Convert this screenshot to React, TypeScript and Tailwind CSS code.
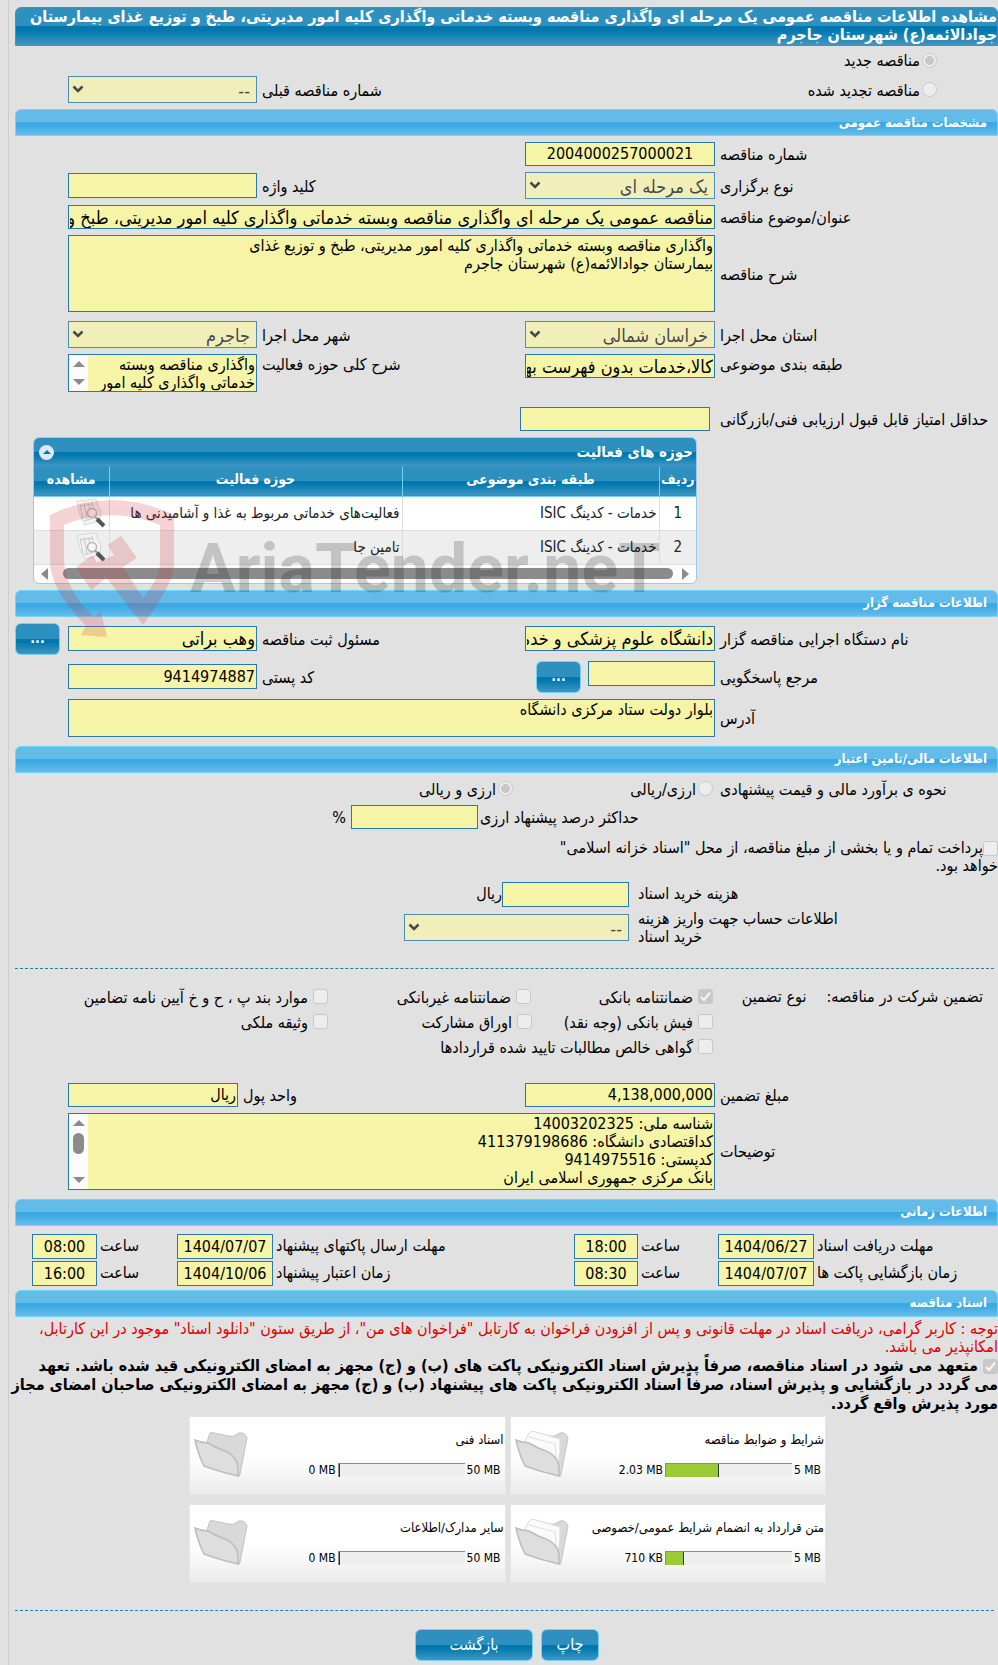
import React from "react";

const GRID = "grid grid-cols-[minmax(0,283fr)_minmax(0,190fr)_minmax(0,268fr)_minmax(0,189fr)_minmax(0,59fr)]";
const FIELD = "block w-full border border-[#2779aa] bg-[#f6f4a6] px-[1px] text-black outline-none";
const AREA = "block w-full resize-none overflow-hidden bg-[#f6f4a6] px-[1px] pt-[1px] text-[16px] leading-[18px] text-black outline-none";
const BLUE = "bg-[linear-gradient(#2e90be_0%,#2e90be_50%,#0078ae_50%,#0078ae_60%,#3f97c2_100%)]";

function Field({
  id,
  value = "",
  size = "text-[18px]",
  className = "h-6",
}: {
  id: string;
  value?: string;
  size?: string;
  className?: string;
}) {
  return <input id={id} type="text" readOnly defaultValue={value} className={`${FIELD} ${size} ${className}`} />;
}

function Label({ id, children, className = "self-center" }: { id: string; children: React.ReactNode; className?: string }) {
  return (
    <label htmlFor={id} className={`pt-[2px] pl-[5px] text-left text-[16px] leading-[18px] whitespace-nowrap ${className}`}>
      {children}
    </label>
  );
}

function Choice({ id, value }: { id: string; value: string }) {
  return (
    <div className="relative opacity-80">
      <select
        id={id}
        disabled
        className="block h-[27px] w-full appearance-none border border-[#2779aa] bg-[#f4f2b0] pr-[6px] pl-7 text-[18px] text-[#222] opacity-100"
      >
        <option>{value}</option>
      </select>
      <svg viewBox="0 0 12 8" className="pointer-events-none absolute top-[9px] left-[4px] h-2 w-3">
        <path d="M1.5 1.5 6 6l4.500-4.500" fill="none" stroke="#222" strokeWidth="2.500" />
      </svg>
    </div>
  );
}

function Section({ title }: { title: string }) {
  return (
    <h2 className="ml-[6px] flex h-[27px] items-center rounded-t-[6px] border border-[#74d1fb] bg-[linear-gradient(#63bbea_0%,#63bbea_48%,#3baae3_50%,#3baae3_60%,#65bdeb_100%)] pr-[10px] text-[13px] font-bold text-white">
      {title}
    </h2>
  );
}

function Radio({ id, name, label, checked = false }: { id: string; name: string; label: string; checked?: boolean }) {
  return (
    <span className="flex items-center gap-[2px]">
      <input
        id={id}
        name={name}
        type="radio"
        disabled
        defaultChecked={checked}
        className="size-[15px] shrink-0 appearance-none rounded-full border border-[#c8c8c8] bg-[#ededed] checked:bg-[radial-gradient(circle,#c8c8c8_0_4px,#ededed_5px)]"
      />
      <label htmlFor={id} className="pt-[2px] text-[16px] leading-[18px] whitespace-nowrap">
        {label}
      </label>
    </span>
  );
}

function Box({ id, checked = false }: { id: string; checked?: boolean }) {
  return (
    <span className="relative inline-block size-[15px] shrink-0">
      <input
        id={id}
        type="checkbox"
        disabled
        defaultChecked={checked}
        className="block size-[15px] appearance-none rounded-[3px] border border-[#c8c8c8] bg-[#ededed] checked:bg-[#c8c8c8]"
      />
      {checked && (
        <svg viewBox="0 0 15 15" className="pointer-events-none absolute inset-0 size-[15px]">
          <path d="M3 8l3 3 6-7.500" fill="none" stroke="#f4f4f4" strokeWidth="2.200" />
        </svg>
      )}
    </span>
  );
}

function Check({ id, label, checked = false }: { id: string; label: string; checked?: boolean }) {
  return (
    <span className="flex items-center gap-[5px]">
      <Box id={id} checked={checked} />
      <label htmlFor={id} className="pt-[3px] text-[16px] leading-[18px] whitespace-nowrap">
        {label}
      </label>
    </span>
  );
}

function Dots({ label }: { label: string }) {
  return (
    <button
      type="button"
      aria-label={label}
      className={`h-8 w-[45px] shrink-0 rounded-[6px] border border-[#74d1fb] text-[14px] font-bold text-white ${BLUE}`}
    >
      ...
    </button>
  );
}

function DocIcon() {
  return (
    <svg viewBox="0 0 32 30" className="h-[30px] w-8">
      <path d="M2 3 21 1q1 7 5 12l-1 10-15 4Q4 18 2 3z" fill="#f3f3f3" stroke="#d8d8d8" />
      <path d="M5 6l3 15M9 5l3 17M13 5l2 6M17 4l1 5M5 8l13-2M9 23l10-3" stroke="#c8c8c8" fill="none" />
      <circle cx="17" cy="15" r="4.500" fill="#f7f7f7" stroke="#b5b5b5" strokeWidth="1.500" />
      <path d="M20 19l3 2" stroke="#999" strokeWidth="2" />
      <path d="M22 21l7 7" stroke="#555" strokeWidth="4" />
    </svg>
  );
}

function FolderIcon({ full }: { full: boolean }) {
  return (
    <svg viewBox="0 0 54 48" className="h-12 w-[54px] shrink-0">
      <path d="M13 11 16 2q1-1 4 0l14 3q5 1 8-1l3-2q6-1 8 5L46 43q0 3-3 2z" fill="#d9d9d9" stroke="#c2c2c2" />
      {full && <path d="M10 10q3-8 7-10l15 4 13 4q1 14-2 27L16 25z" fill="#fbfbfb" stroke="#d8d8d8" />}
      {full && <path d="M14 6l26 7q2 10 0 22" fill="none" stroke="#e0e0e0" />}
      <path d="M1 9q7 3 13 3 8 5 17 8 12 5 13 16v9Q26 41 10 35 4 23 1 9z" fill="#dedede" stroke="#bdbdbd" strokeWidth="1.500" />
    </svg>
  );
}

function ScrollStrip({ thumb }: { thumb: boolean }) {
  return (
    <div className="flex w-[19px] shrink-0 flex-col items-center justify-between bg-[#fcfcfc] py-[6px]">
      <svg viewBox="0 0 12 6" className="h-[6px] w-3">
        <path d="M0 6 6 0l6 6z" fill="#8b8b8b" />
      </svg>
      {thumb && <span className="mb-4 h-[21px] w-[11px] rounded-full bg-[#8b8b8b]" />}
      <svg viewBox="0 0 12 6" className="h-[6px] w-3">
        <path d="M0 0 6 6l6-6z" fill="#8b8b8b" />
      </svg>
    </div>
  );
}

function Watermark() {
  return (
    <div aria-hidden="true" dir="ltr" className="pointer-events-none absolute top-[60px] left-[50px] flex items-start">
      <svg viewBox="50 497 126 142" className="h-[142px] w-[126px]">
        <g fill="#cf2b33" opacity=".2">
          <path d="M50 515Q112 485 174 515V566Q172 586 143 625L95 563 115 555 143 598Q160 578 160 562V525Q112 505 64 525V560Q65 590 94 617L101 612 107 637 81 635 86 626Q50 590 50 560z" />
          <path d="M108 545l13-9 16 22-16 10zM76 567l17-12 12 24-14 11z" />
        </g>
      </svg>
      <span className="mt-[26px] ml-[14px] font-['Roboto',sans-serif] text-[68px] leading-[92px] font-bold text-black/18">
        AriaTender.neT
      </span>
    </div>
  );
}

const ROWS = [
  { n: 1, kind: "خدمات - کدینگ ISIC", area: "فعالیت‌های خدماتی مربوط به غذا و آشامیدنی ها" },
  { n: 2, kind: "خدمات - کدینگ ISIC", area: "تامین جا" },
];

function Activities() {
  const th = "border-l border-[#74d1fb] pb-1 text-center text-[14px] font-bold last:border-l-0";
  const td = "border-l border-[#dcdcdc] px-[2px] text-[15px] last:border-l-0";
  return (
    <div className="relative mr-[301px] ml-[24px]">
      <div className="overflow-hidden rounded-[6px] border border-[#9ccbe8] bg-[#fcfcfc]">
        <div className={`flex h-[29px] items-center justify-between border-b border-[#3c92d0] pr-[3px] pl-[5px] text-white ${BLUE}`}>
          <h3 className="text-[15px] font-bold">حوزه های فعالیت</h3>
          <button type="button" aria-label="بستن جدول" className="flex size-[15px] items-center justify-center rounded-full bg-[#dfe6f5]">
            <svg viewBox="0 0 8 4" className="h-1 w-2">
              <path d="M0 4 4 0l4 4z" fill="#0078ae" />
            </svg>
          </button>
        </div>
        <table className="w-full table-fixed border-collapse text-[#222]">
          <colgroup>
            <col className="w-[37px]" />
            <col className="w-[257px]" />
            <col />
            <col className="w-[75px]" />
          </colgroup>
          <thead>
            <tr className={`h-[29px] border-b border-[#74d1fb] text-white ${BLUE}`}>
              <th className={th}>ردیف</th>
              <th className={th}>طبقه بندی موضوعی</th>
              <th className={th}>حوزه فعالیت</th>
              <th className={th}>مشاهده</th>
            </tr>
          </thead>
          <tbody>
            {ROWS.map((r) => (
              <tr key={r.n} className="h-[34px] border-b border-[#dcdcdc] bg-white even:bg-[#eeeeee]">
                <td className={`${td} text-center`}>{r.n}</td>
                <td className={td}>{r.kind}</td>
                <td className={`${td} whitespace-nowrap`}>{r.area}</td>
                <td className={td}>
                  <button type="button" aria-label="مشاهده" className="block h-[30px]">
                    <DocIcon />
                  </button>
                </td>
              </tr>
            ))}
          </tbody>
        </table>
        <div dir="ltr" className="flex h-[18px] items-center justify-between px-[7px]">
          <svg viewBox="0 0 7 12" className="h-3 w-[7px]">
            <path d="M7 0 0 6l7 6z" fill="#8b8b8b" />
          </svg>
          <span className="mr-[9px] ml-[15px] h-[11px] flex-1 rounded-full bg-[#8b8b8b]" />
          <svg viewBox="0 0 7 12" className="h-3 w-[7px]">
            <path d="M0 0l7 6-7 6z" fill="#8b8b8b" />
          </svg>
        </div>
      </div>
      <div className="absolute top-0 left-[-33px] z-10">
        <Watermark />
      </div>
    </div>
  );
}

const DATE_GRID =
  "grid items-center grid-cols-[minmax(0,184fr)_minmax(0,96fr)_minmax(0,80fr)_minmax(0,64fr)_minmax(0,301fr)_minmax(0,96fr)_minmax(0,80fr)_minmax(0,65fr)_minmax(0,23fr)]";

function DateRow({ id, items }: { id: string; items: [string, string, string][] }) {
  const label = "pl-[3px] text-left text-[16px] leading-[18px] whitespace-nowrap";
  const input = `${FIELD} h-[25px] text-center text-[16px]`;
  return (
    <div className={DATE_GRID}>
      {items.map(([title, date, time], i) => (
        <React.Fragment key={title}>
          <label htmlFor={`${id}d${i}`} className={label}>
            {title}
          </label>
          <input id={`${id}d${i}`} readOnly defaultValue={date} className={input} />
          <label htmlFor={`${id}t${i}`} className={label}>
            ساعت
          </label>
          <input id={`${id}t${i}`} readOnly defaultValue={time} className={input} />
        </React.Fragment>
      ))}
    </div>
  );
}

const DOCS = [
  { title: "شرایط و ضوابط مناقصه", used: "2.03 MB", max: "5 MB", pct: 42 },
  { title: "اسناد فنی", used: "0 MB", max: "50 MB", pct: 0 },
  { title: "متن قرارداد به انضمام شرایط عمومی/خصوصی", used: "710 KB", max: "5 MB", pct: 14 },
  { title: "سایر مدارک/اطلاعات", used: "0 MB", max: "50 MB", pct: 0 },
];

function DocCard({ title, used, max, pct }: (typeof DOCS)[number]) {
  return (
    <article
      dir="ltr"
      className="flex h-[79px] items-center border border-[#e6e6e6] bg-[linear-gradient(#ffffff_0%,#ffffff_50%,#ececec_100%)] pr-[1px] pl-[4px]"
    >
      <FolderIcon full={pct > 0} />
      <div className="flex min-w-0 flex-1 flex-col gap-[14px]">
        <h3 dir="rtl" className="text-[13px] leading-4 whitespace-nowrap">
          {title}
        </h3>
        <div className="flex items-center justify-end gap-[2px] pr-[3px] text-[12px] leading-4">
          <span>{used}</span>
          <div className="h-[14px] w-[127px] border-t border-l border-[#8a8a8a] bg-[#eeeeee]">
            <div className="h-full border-r border-[#333] bg-[#9acb34]" style={{ width: `${pct}%` }} />
          </div>
          <span>{max}</span>
        </div>
      </div>
    </article>
  );
}

export default function App() {
  return (
    <div className="bg-[#e1e1e1] pl-2">
      <main
        dir="rtl"
        lang="fa"
        className="border-l border-[#cdcdcd] pt-[7px] pb-[5px] font-['DejaVu_Sans_Condensed','DejaVu_Sans',sans-serif] text-black"
      >
        <h1
          className={`ml-[6px] rounded-t-[6px] border border-[#3c92d0] pb-[1px] text-[16px] leading-[18px] font-bold text-white ${BLUE}`}
        >
          مشاهده اطلاعات مناقصه عمومی یک مرحله ای واگذاری مناقصه وبسته خدماتی واگذاری کلیه امور مدیریتی، طبخ و توزیع غذای بیمارستان
          جوادالائمه(ع) شهرستان جاجرم
        </h1>

        <div className="flex h-7 items-center pr-[61px]">
          <Radio id="new" name="kind" label="مناقصه جدید" checked />
        </div>
        <div className={`${GRID} mt-[2px] mb-[6px]`}>
          <div className="flex items-center pr-[61px]">
            <Radio id="renewed" name="kind" label="مناقصه تجدید شده" />
          </div>
          <span />
          <Label id="prev">شماره مناقصه قبلی</Label>
          <Choice id="prev" value="--" />
        </div>

        <Section title="مشخصات مناقصه عمومی" />
        <div className="flex flex-col gap-[6px] py-[6px]">
          <div className={GRID}>
            <Label id="num">شماره مناقصه</Label>
            <Field id="num" value="2004000257000021" size="text-[16px]" className="h-6 text-center" />
          </div>
          <div className={GRID}>
            <Label id="type">نوع برگزاری</Label>
            <Choice id="type" value="یک مرحله ای" />
            <Label id="key">کلید واژه</Label>
            <Field id="key" className="mt-px h-[25px]" />
          </div>
          <div className={GRID}>
            <Label id="subject">عنوان/موضوع مناقصه</Label>
            <div className="col-span-3">
              <Field
                id="subject"
                value="مناقصه عمومی یک مرحله ای واگذاری مناقصه وبسته خدماتی واگذاری کلیه امور مدیریتی، طبخ و توزیع غذای بیمارستان"
              />
            </div>
          </div>
          <div className={GRID}>
            <Label id="desc">شرح مناقصه</Label>
            <div className="col-span-3 border border-[#2779aa]">
              <textarea
                id="desc"
                readOnly
                className={`${AREA} h-[75px]`}
                defaultValue={
                  "واگذاری مناقصه وبسته خدماتی واگذاری کلیه امور مدیریتی، طبخ و توزیع غذای\nبیمارستان جوادالائمه(ع) شهرستان جاجرم"
                }
              />
            </div>
          </div>
          <div className={`${GRID} mt-[3px]`}>
            <Label id="province">استان محل اجرا</Label>
            <Choice id="province" value="خراسان شمالی" />
            <Label id="city">شهر محل اجرا</Label>
            <Choice id="city" value="جاجرم" />
          </div>
          <div className={`${GRID} mb-[9px]`}>
            <Label id="cat" className="self-start">
              طبقه بندی موضوعی
            </Label>
            <Field id="cat" value="کالا،خدمات بدون فهرست بها" />
            <Label id="general" className="self-start">
              شرح کلی حوزه فعالیت
            </Label>
            <div className="flex border border-[#2779aa]">
              <textarea
                id="general"
                readOnly
                className={`${AREA} h-9 min-w-0 flex-1`}
                defaultValue={"واگذاری مناقصه وبسته\nخدماتی واگذاری کلیه امور"}
              />
              <ScrollStrip thumb={false} />
            </div>
          </div>
          <div className="grid grid-cols-[minmax(0,288fr)_minmax(0,190fr)_minmax(0,511fr)]">
            <label htmlFor="score" className="self-center pt-[2px] pl-[10px] text-left text-[16px] leading-[18px] whitespace-nowrap">
              حداقل امتیاز قابل قبول ارزیابی فنی/بازرگانی
            </label>
            <Field id="score" />
          </div>
          <Activities />
        </div>

        <Section title="اطلاعات مناقصه گزار" />
        <div className="flex flex-col gap-[6px] pt-[6px] pb-[9px]">
          <div className={`${GRID} items-center`}>
            <Label id="agency">نام دستگاه اجرایی مناقصه گزار</Label>
            <Field id="agency" value="دانشگاه علوم پزشکی و خدمات بهداشتی" className="h-[25px]" />
            <Label id="officer">مسئول ثبت مناقصه</Label>
            <Field id="officer" value="وهب براتی" className="h-[25px]" />
            <div className="flex pr-2">
              <Dots label="انتخاب مسئول" />
            </div>
          </div>
          <div className={`${GRID} items-center`}>
            <Label id="contact">مرجع پاسخگویی</Label>
            <div className="flex items-start gap-[7px]">
              <div className="w-[127px]">
                <Field id="contact" className="h-[25px]" />
              </div>
              <Dots label="انتخاب مرجع" />
            </div>
            <Label id="postal">کد پستی</Label>
            <Field id="postal" value="9414974887" size="text-[16px]" className="h-[25px]" />
          </div>
          <div className={GRID}>
            <Label id="address">آدرس</Label>
            <div className="col-span-3 border border-[#2779aa]">
              <textarea id="address" readOnly className={`${AREA} h-9`} defaultValue="بلوار دولت ستاد مرکزی دانشگاه" />
            </div>
          </div>
        </div>

        <Section title="اطلاعات مالی/تامین اعتبار" />
        <div className="pt-[6px]">
          <div className={`${GRID} h-[18px] items-center`}>
            <span className="pt-[2px] pl-[5px] text-left text-[16px] leading-[18px] whitespace-nowrap">
              نحوه ی برآورد مالی و قیمت پیشنهادی
            </span>
            <div className="pr-[2px]">
              <Radio id="either" name="currency" label="ارزی/ریالی" />
            </div>
            <div className="pr-3">
              <Radio id="both" name="currency" label="ارزی و ریالی" checked />
            </div>
          </div>
          <div className="mt-2 grid grid-cols-[minmax(0,520fr)_minmax(0,127fr)_minmax(0,342fr)] items-center">
            <label htmlFor="percent" className="pt-[2px] pl-[2px] text-left text-[16px] leading-[18px]">
              حداکثر درصد پیشنهاد ارزی
            </label>
            <Field id="percent" />
            <span className="pt-[2px] pr-[5px] text-[16px] leading-[18px]">%</span>
          </div>
          <p className="mt-[10px] mb-[7px] pl-[525px] text-[16px] leading-[18px]">
            <span className="inline-flex align-middle">
              <Box id="treasury" />
            </span>
            <label htmlFor="treasury">پرداخت تمام و یا بخشی از مبلغ مناقصه، از محل "اسناد خزانه اسلامی" خواهد بود.</label>
          </p>
          <div className="grid grid-cols-[minmax(0,369fr)_minmax(0,127fr)_minmax(0,493fr)] items-center">
            <label htmlFor="cost" className="pl-[9px] text-left text-[16px] leading-[18px]">
              هزینه خرید اسناد
            </label>
            <Field id="cost" className="h-[25px]" />
            <span className="text-[16px] leading-[18px]">ریال</span>
          </div>
          <div className="mt-[3px] grid grid-cols-[minmax(0,145fr)_minmax(0,224fr)_minmax(0,225fr)_minmax(0,395fr)] items-center">
            <span />
            <label htmlFor="account" className="pl-[9px] text-left text-[16px] leading-[18px]">
              اطلاعات حساب جهت واریز هزینه خرید اسناد
            </label>
            <Choice id="account" value="--" />
          </div>
        </div>
        <hr className="mt-[22px] mr-1 ml-[6px] border-t border-dashed border-[#2779aa]" />

        <div className="mt-[15px] grid auto-rows-[25px] grid-cols-[minmax(0,283fr)_minmax(0,183fr)_minmax(0,204fr)_minmax(0,319fr)] items-center">
          <div className="flex gap-5 pt-[2px] pr-[15px] text-[16px] leading-[18px] whitespace-nowrap">
            <span>تضمین شرکت در مناقصه:</span>
            <span>نوع تضمین</span>
          </div>
          <div className="pr-[2px]">
            <Check id="g1" label="ضمانتنامه بانکی" checked />
          </div>
          <div className="pr-[1px]">
            <Check id="g2" label="ضمانتنامه غیربانکی" />
          </div>
          <Check id="g3" label="موارد بند پ ، ح و خ آیین نامه تضامین" />
          <span />
          <div className="pr-[2px]">
            <Check id="g4" label="فیش بانکی (وجه نقد)" />
          </div>
          <Check id="g5" label="اوراق مشارکت" />
          <Check id="g6" label="وثیقه ملکی" />
          <span />
          <div className="col-span-2 pr-[2px]">
            <Check id="g7" label="گواهی خالص مطالبات تایید شده قراردادها" />
          </div>
        </div>

        <div className="mt-6 flex flex-col gap-[6px] pb-[9px]">
          <div className="grid grid-cols-[minmax(0,283fr)_minmax(0,190fr)_minmax(0,287fr)_minmax(0,170fr)_minmax(0,59fr)]">
            <Label id="amount">مبلغ تضمین</Label>
            <Field id="amount" value="4,138,000,000" size="text-[16px]" />
            <Label id="unit">واحد پول</Label>
            <Field id="unit" value="ریال" size="text-[16px]" />
          </div>
          <div className={GRID}>
            <Label id="notes">توضیحات</Label>
            <div className="col-span-3 flex border border-[#2779aa]">
              <textarea
                id="notes"
                readOnly
                className={`${AREA} h-[75px] flex-1`}
                defaultValue={
                  "شناسه ملی: 14003202325\nکداقتصادی دانشگاه: 411379198686\nکدپستی: 9414975516\nبانک مرکزی جمهوری اسلامی ایران"
                }
              />
              <ScrollStrip thumb />
            </div>
          </div>
        </div>

        <Section title="اطلاعات زمانی" />
        <div className="flex flex-col gap-[2px] pt-2 pb-1">
          <DateRow
            id="a"
            items={[
              ["مهلت دریافت اسناد", "1404/06/27", "18:00"],
              ["مهلت ارسال پاکتهای پیشنهاد", "1404/07/07", "08:00"],
            ]}
          />
          <DateRow
            id="b"
            items={[
              ["زمان بازگشایی پاکت ها", "1404/07/07", "08:30"],
              ["زمان اعتبار پیشنهاد", "1404/10/06", "16:00"],
            ]}
          />
        </div>

        <Section title="اسناد مناقصه" />
        <p className="mt-[3px] pl-[6px] text-[16px] leading-[18px] text-[#dd0000]">
          توجه : کاربر گرامی، دریافت اسناد در مهلت قانونی و پس از افزودن فراخوان به کارتابل "فراخوان های من"، از طریق ستون "دانلود
          اسناد" موجود در این کارتابل، امکانپذیر می باشد.
        </p>
        <p className="text-[16px] leading-[19px] font-bold">
          <span className="ml-[5px] inline-flex align-middle">
            <Box id="commit" checked />
          </span>
          <label htmlFor="commit">
            متعهد می شود در اسناد مناقصه، صرفاً پذیرش اسناد الکترونیکی پاکت های (ب) و (ج) مجهز به امضای الکترونیکی قید شده باشد. تعهد
            <br />
            می گردد در بازگشایی و پذیرش اسناد، صرفاً اسناد الکترونیکی پاکت های پیشنهاد (ب) و (ج) مجهز به امضای الکترونیکی صاحبان امضای
            مجاز مورد پذیرش واقع گردد.
          </label>
        </p>

        <div className="mt-[3px] mr-[172px] ml-[180px] grid grid-cols-2 gap-x-1 gap-y-[9px]">
          {DOCS.map((d) => (
            <DocCard key={d.title} {...d} />
          ))}
        </div>
        <hr className="mt-[27px] mr-1 ml-[6px] border-t border-dashed border-[#2779aa]" />
        <div className="mt-[18px] flex justify-center gap-2 pl-[7px]">
          <button type="button" className={`h-8 w-[58px] rounded-[6px] border border-[#74d1fb] text-[16px] text-white ${BLUE}`}>
            چاپ
          </button>
          <button type="button" className={`h-8 w-[118px] rounded-[6px] border border-[#74d1fb] text-[16px] text-white ${BLUE}`}>
            بازگشت
          </button>
        </div>
      </main>
    </div>
  );
}
